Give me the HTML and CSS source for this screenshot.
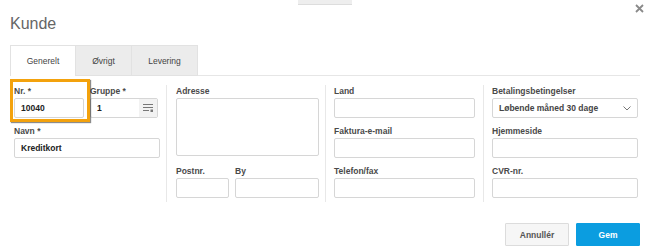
FILE: index.html
```html
<!DOCTYPE html>
<html lang="da">

<head>
    <meta charset="UTF-8">
    <title>Kunde</title>
    <link rel="stylesheet" href="styles.css">
</head>

<body>
    <div class="grip"></div>
    <div class="dialog">
        <!-- Title and close -->
        <div class="header">
            <h1>Kunde</h1>
            <svg class="close" width="9" height="9" viewBox="0 0 9 9">
                <path d="M1 1 L8 8 M8 1 L1 8" stroke="#8a8a8a" stroke-width="1.8" />
            </svg>
        </div>

        <!-- Tabs -->
        <div class="tabs">
            <div class="tab active">Generelt</div>
            <div class="tab">Øvrigt</div>
            <div class="tab wide">Levering</div>
            <div class="tab-rest"></div>
        </div>

        <!-- Form columns -->
        <div class="form">
            <div class="col col-first">
                <div class="row">
                    <div class="field nr">
                        <label>Nr. *</label>
                        <div class="input strong">10040</div>
                        <span class="highlight"></span>
                    </div>
                    <div class="field gruppe">
                        <label>Gruppe *</label>
                        <div class="input strong with-btn">
                            <span class="value">1</span>
                            <span class="btn-list">
                                <svg width="11" height="8" viewBox="0 0 11 8">
                                    <path d="M0 0.5 H10 M0 3.5 H10 M0 6.5 H6" stroke="#777" stroke-width="1" />
                                    <rect x="7.5" y="5.5" width="2.5" height="2.5" fill="#777" />
                                </svg>
                            </span>
                        </div>
                    </div>
                </div>
                <div class="field">
                    <label>Navn *</label>
                    <div class="input strong">Kreditkort</div>
                </div>
            </div>

            <div class="col col-second">
                <div class="field">
                    <label>Adresse</label>
                    <div class="input area"></div>
                </div>
                <div class="row">
                    <div class="field postnr">
                        <label>Postnr.</label>
                        <div class="input"></div>
                    </div>
                    <div class="field by">
                        <label>By</label>
                        <div class="input"></div>
                    </div>
                </div>
            </div>

            <div class="col col-third">
                <div class="field">
                    <label>Land</label>
                    <div class="input"></div>
                </div>
                <div class="field">
                    <label>Faktura-e-mail</label>
                    <div class="input"></div>
                </div>
                <div class="field">
                    <label>Telefon/fax</label>
                    <div class="input"></div>
                </div>
            </div>

            <div class="col col-fourth">
                <div class="field">
                    <label>Betalingsbetingelser</label>
                    <div class="input select">
                        <span>Løbende måned 30 dage</span>
                        <svg width="8" height="5" viewBox="0 0 8 5">
                            <path d="M0.5 0.5 L4 4 L7.5 0.5" fill="none" stroke="#777" stroke-width="1" />
                        </svg>
                    </div>
                </div>
                <div class="field">
                    <label>Hjemmeside</label>
                    <div class="input"></div>
                </div>
                <div class="field">
                    <label>CVR-nr.</label>
                    <div class="input"></div>
                </div>
            </div>
        </div>

        <!-- Footer buttons -->
        <div class="footer">
            <button class="button cancel">Annullér</button>
            <button class="button save">Gem</button>
        </div>
    </div>
</body>

</html>
```

FILE: styles.css
```css
/* Reset */
* {
    margin: 0;
    padding: 0;
    box-sizing: border-box;
}

body {
    width: 650px;
    height: 251px;
    background: #fff;
    font-family: "Liberation Sans", Arial, sans-serif;
    color: #444;
    position: relative;
    overflow: hidden;
}

/* Little drag grip at the top */
.grip {
    position: absolute;
    top: 0;
    left: 298px;
    width: 54px;
    height: 5px;
    background: #eee;
    border-bottom: 1px solid #ddd;
}

.dialog {
    padding: 0 10px;
}

/* Header */
.header {
    display: flex;
    justify-content: space-between;
    align-items: flex-start;
    height: 45px;
}

.header h1 {
    font-family: "Liberation Sans", Arial, sans-serif;
    font-weight: normal;
    font-size: 16px;
    color: #666;
    margin-top: 15px;
}

.close {
    margin-top: 4px;
    margin-right: -4px;
}

/* Tabs */
.tabs {
    display: flex;
    height: 31px;
}

.tab {
    width: 56px;
    border: 1px solid #e2e2e2;
    border-left: none;
    background: #ececec;
    font-size: 8.5px;
    color: #444;
    display: flex;
    align-items: center;
    justify-content: center;
}

.tab.active {
    width: 66px;
    background: #fff;
    border-left: 1px solid #e2e2e2;
    border-bottom: none;
}

.tab.wide {
    width: 66px;
}

.tab-rest {
    flex: 1;
    border-bottom: 1px solid #e6e6e6;
}

/* Form */
.form {
    display: flex;
    padding: 9px 0 0 4px;
    height: 126px;
}

.col {
    display: flex;
    flex-direction: column;
    gap: 9px;
    padding-top: 2px;
}

.col-first {
    width: 152px;
    padding-right: 6px;
}

.col-second {
    width: 159px;
    border-left: 1px solid #e8e8e8;
    padding: 2px 6px 0 9px;
    gap: 11px;
}

.col-third {
    width: 158px;
    border-left: 1px solid #e8e8e8;
    padding: 2px 8px 0 8px;
}

.col-fourth {
    width: 155px;
    border-left: 1px solid #e8e8e8;
    padding: 2px 0 0 8px;
}

.row {
    display: flex;
    gap: 6px;
}

.field {
    display: flex;
    flex-direction: column;
}

.field label {
    font-size: 8.5px;
    font-weight: bold;
    color: #4a4a4a;
    height: 11px;
    line-height: 9px;
}

.input {
    height: 20px;
    border: 1px solid #d6d6d6;
    border-radius: 2px;
    background: #fff;
    font-size: 8.5px;
    display: flex;
    align-items: center;
    padding: 0 6px;
    color: #222;
}

.input.strong {
    font-weight: bold;
}

.input.area {
    height: 58px;
}

/* Nr. field with tutorial highlight */
.nr {
    width: 70px;
    position: relative;
}

.highlight {
    position: absolute;
    left: -4px;
    top: -8px;
    width: 80px;
    height: 43px;
    border: 3px solid #f3a20d;
    box-shadow: 1px 1px 1px rgba(0, 0, 0, 0.45);
}

.gruppe {
    width: 68px;
}

.input.with-btn {
    padding: 0 0 0 6px;
    justify-content: space-between;
}

.btn-list {
    width: 18px;
    height: 100%;
    background: #f2f2f2;
    display: flex;
    align-items: center;
    justify-content: center;
}

.postnr {
    width: 53px;
}

.by {
    flex: 1;
}

.input.select {
    justify-content: space-between;
    color: #444;
    font-weight: bold;
    font-size: 8.5px;
    padding-right: 6px;
}

/* Footer */
.footer {
    display: flex;
    justify-content: flex-end;
    gap: 7px;
    margin-top: 21px;
}

.button {
    height: 23px;
    width: 64px;
    font-family: "Liberation Sans", Arial, sans-serif;
    font-size: 8.5px;
    font-weight: bold;
    border-radius: 1px;
}

.cancel {
    background: #f6f6f6;
    border: 1px solid #dcdcdc;
    color: #555;
}

.save {
    background: #0b9de0;
    border: 1px solid #0b9de0;
    color: #fff;
}
```
